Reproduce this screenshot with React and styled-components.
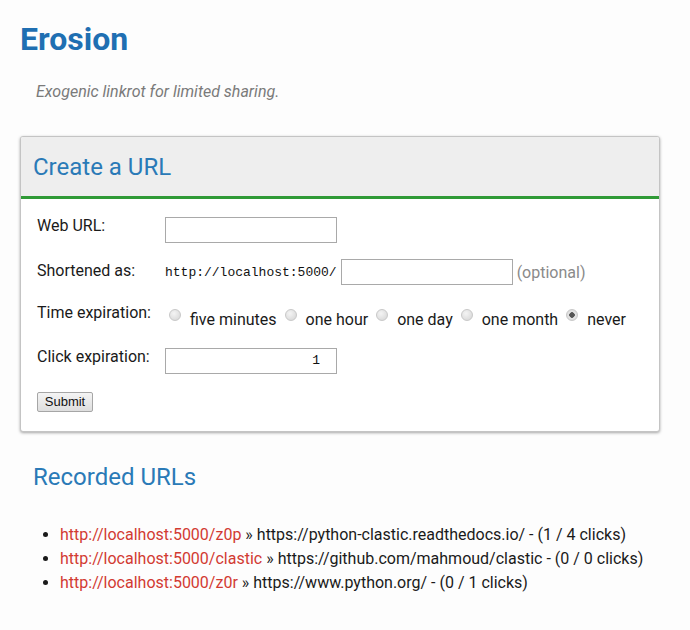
import React from 'react';
import styled, { createGlobalStyle } from 'styled-components';

const GlobalStyle = createGlobalStyle`
  body {
    margin: 0;
    background: #fdfdfd;
    font-family: Roboto, "Liberation Sans", sans-serif;
    color: #1a1a1a;
  }
`;

const Page = styled.div`
  width: 640px;
  margin-left: 20px;
  padding-top: 20px;
`;

const Title = styled.h1`
  margin: 0;
  font-size: 32px;
  font-weight: 700;
  color: #1f6fb2;
`;

const Tagline = styled.p`
  margin: 24px 0 0 16px;
  font-size: 16px;
  font-style: italic;
  color: #7a7a7a;
`;

const Card = styled.section`
  margin-top: 35px;
  border: 1px solid #c4c4c4;
  border-radius: 3px;
  background: #fff;
  box-shadow: 0 1px 3px rgba(0, 0, 0, 0.35);
  overflow: hidden;
`;

const CardHeader = styled.div`
  height: 59px;
  display: flex;
  align-items: center;
  padding: 0 12px;
  background: #eeeeee;
  border-bottom: 3px solid #2f9a36;
`;

const SectionTitle = styled.h2`
  margin: 0;
  font-size: 24px;
  font-weight: 400;
  color: #2a7ab7;
  padding-left: ${p => p.$indent || 0}px;
`;

const Form = styled.form`
  display: grid;
  grid-template-columns: 128px 1fr;
  row-gap: 16px;
  align-items: start;
  padding: 18px 16px 19px;
`;

const Label = styled.label`
  font-size: 16px;
  line-height: 18.75px;
  padding-top: ${p => p.$top || 0}px;
`;

const Field = styled.div`
  display: flex;
  align-items: center;
  gap: 4px;
`;

const TextInput = styled.input`
  box-sizing: border-box;
  width: 172px;
  height: 26px;
  margin: 0;
  border: 1px solid #a9a9a9;
  padding: 0 16px 0 4px;
  font-family: "Liberation Mono", monospace;
  font-size: 13px;
  color: #111;
  background: #fff;
  text-align: ${p => (p.$right ? 'right' : 'left')};
  outline: none;
`;

const Prefix = styled.span`
  font-family: "Liberation Mono", monospace;
  font-size: 13px;
  color: #111;
`;

const Hint = styled.span`
  font-size: 16px;
  color: #8a8a8a;
`;

const Options = styled.div`
  display: flex;
  gap: 8px;
  padding: 6px 0 2px;
  margin-left: 4px;
`;

const Option = styled.label`
  display: inline-flex;
  align-items: flex-start;
  gap: 9px;
  font-size: 16px;
`;

const Radio = styled.input.attrs({ type: 'radio' })`
  appearance: none;
  box-sizing: border-box;
  width: 12px;
  height: 12px;
  margin: 0;
  border-radius: 50%;
  border: 1px solid #c8c8c8;
  background: radial-gradient(circle at 40% 35%, #f4f4f4, #d4d4d4);
  position: relative;
  top: 2px;

  &:checked {
    background: radial-gradient(circle, #555 0 2.5px, #e6e6e6 3px, #d2d2d2);
  }
`;

const OptionText = styled.span`
  padding-top: 4px;
  line-height: 18.75px;
`;

const Submit = styled.button`
  grid-column: 1 / span 2;
  justify-self: start;
  margin-top: 2px;
  width: 56px;
  height: 20px;
  padding: 0;
  border: 1px solid #a6a6a6;
  border-radius: 2px;
  background: linear-gradient(#f4f4f4, #dedede);
  font-family: "Liberation Sans", Arial, sans-serif;
  font-size: 13px;
  color: #111;
`;

const Recorded = styled.div`
  margin-top: 31px;
`;

const List = styled.ul`
  margin: 32px 0 0;
  padding-left: 40px;
  font-size: 16px;
  line-height: 24px;
`;

const Short = styled.a`
  color: #d23a32;
  text-decoration: none;
`;

const urls = [
  { slug: 'z0p', target: 'https://python-clastic.readthedocs.io/', clicks: '1 / 4' },
  { slug: 'clastic', target: 'https://github.com/mahmoud/clastic', clicks: '0 / 0' },
  { slug: 'z0r', target: 'https://www.python.org/', clicks: '0 / 1' },
];

const times = ['five minutes', 'one hour', 'one day', 'one month', 'never'];

export default function App() {
  return (
    <Page>
      <GlobalStyle />
      <Title>Erosion</Title>
      <Tagline>Exogenic linkrot for limited sharing.</Tagline>

      <Card>
        <CardHeader>
          <SectionTitle>Create a URL</SectionTitle>
        </CardHeader>
        <Form onSubmit={e => e.preventDefault()}>
          <Label>Web URL:</Label>
          <Field>
            <TextInput type="text" />
          </Field>

          <Label $top={3}>Shortened as:</Label>
          <Field>
            <Prefix>http://localhost:5000/</Prefix>
            <TextInput type="text" />
            <Hint>(optional)</Hint>
          </Field>

          <Label $top={3}>Time expiration:</Label>
          <Options>
            {times.map(t => (
              <Option key={t}>
                <Radio name="time" defaultChecked={t === 'never'} />
                <OptionText>{t}</OptionText>
              </Option>
            ))}
          </Options>

          <Label>Click expiration:</Label>
          <Field>
            <TextInput type="text" defaultValue="1" $right />
          </Field>

          <Submit type="submit">Submit</Submit>
        </Form>
      </Card>

      <Recorded>
        <SectionTitle $indent={13}>Recorded URLs</SectionTitle>
        <List>
          {urls.map(u => (
            <li key={u.slug}>
              <Short href="#">http://localhost:5000/{u.slug}</Short> » {u.target} - ({u.clicks} clicks)
            </li>
          ))}
        </List>
      </Recorded>
    </Page>
  );
}
